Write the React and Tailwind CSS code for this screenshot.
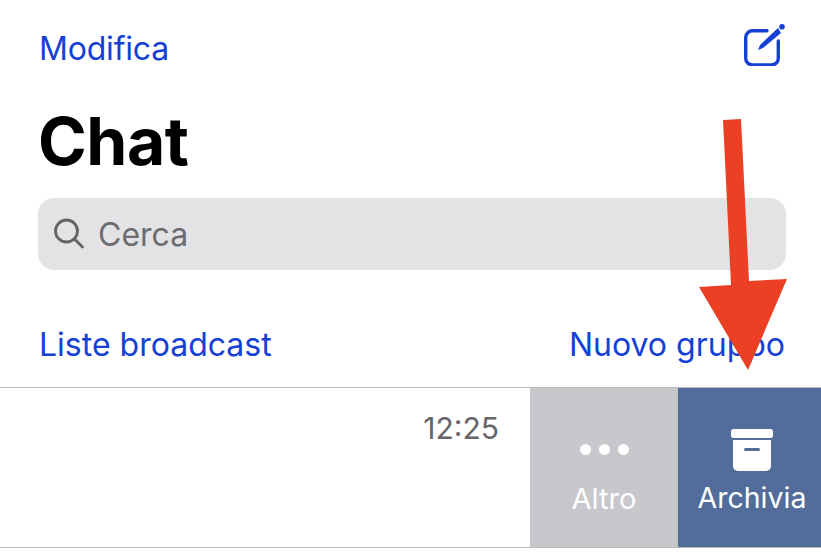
export default function App() {
  return (
    <div className="relative w-[821px] h-[553px] bg-white overflow-hidden font-['Inter',sans-serif]">
      <header className="flex items-start justify-between h-[97px] pt-[24px] pl-[39px] pr-[33px]">
        <span className="mt-[9px] text-[32px] text-[#1540d6] leading-none tracking-[-0.2px]">Modifica</span>
        <svg width="44" height="42" viewBox="0 0 44 42" fill="none">
          <path d="M23 6.7H8.5a6.8 6.8 0 0 0-6.8 6.8v20.7a6.8 6.8 0 0 0 6.8 6.8h19a6.8 6.8 0 0 0 6.8-6.8V17" stroke="#1540d6" strokeWidth="3.4" strokeLinecap="round" />
          <path d="M14 26L16 21L34 4L37 9L19 24Z" fill="#1540d6" />
          <circle cx="38" cy="2.8" r="2.8" fill="#1540d6" />
        </svg>
      </header>

      <h1 className="pl-[38px] text-[66px] font-bold text-black leading-[88px] tracking-[-0.5px] h-[101px]">Chat</h1>

      <div className="ml-[38px] mr-[35px] h-[72px] rounded-[16px] bg-[#e3e3e5] flex items-center pl-[15px] gap-[13px]">
        <svg width="32" height="32" viewBox="0 0 32 32" fill="none" stroke="#636366" strokeWidth="2.8" strokeLinecap="round">
          <circle cx="13.5" cy="13" r="11" />
          <path d="M21.5 21l8 8" />
        </svg>
        <span className="mt-[2px] text-[32px] text-[#6c6c70] leading-none">Cerca</span>
      </div>

      <div className="flex items-start justify-between h-[117px] pt-[59px] pl-[39px] pr-[36px]">
        <span className="text-[32px] text-[#1540d6] leading-none">Liste broadcast</span>
        <span className="text-[32px] text-[#1540d6] leading-none">Nuovo gruppo</span>
      </div>

      <div className="flex h-[161px] border-y border-[#b9b9bc]">
        <div className="w-[530px] flex justify-end items-start pt-[25px] pr-[31px]">
          <span className="text-[30px] text-[#66666a] leading-none">12:25</span>
        </div>
        <div className="w-[148px] bg-[#c7c7cc] flex flex-col items-center pt-[56px] text-white">
          <div className="flex gap-[8px] h-[12px]">
            <span className="w-[11px] h-[11px] rounded-full bg-white" />
            <span className="w-[11px] h-[11px] rounded-full bg-white" />
            <span className="w-[11px] h-[11px] rounded-full bg-white" />
          </div>
          <span className="mt-[28px] text-[29px] leading-none">Altro</span>
        </div>
        <div className="w-[143px] bg-[#526d9c] flex flex-col items-center pt-[41px] pl-[5px] text-white">
          <svg width="42" height="42" viewBox="0 0 42 42" fill="white">
            <rect x="0" y="0" width="42" height="9" rx="2.5" />
            <path d="M2 11h38v26a5 5 0 0 1-5 5H7a5 5 0 0 1-5-5z" />
            <rect x="13" y="19" width="16" height="3" rx="1.5" fill="#526d9c" />
          </svg>
          <span className="mt-[13px] text-[28.5px] leading-none">Archivia</span>
        </div>
      </div>

      <svg className="absolute left-0 top-0 pointer-events-none" width="821" height="553" viewBox="0 0 821 553">
        <path d="M723 120L741 119L749 281L787 279L748 370L699 287L731 285Z" fill="#ec4024" />
      </svg>
    </div>
  );
}
